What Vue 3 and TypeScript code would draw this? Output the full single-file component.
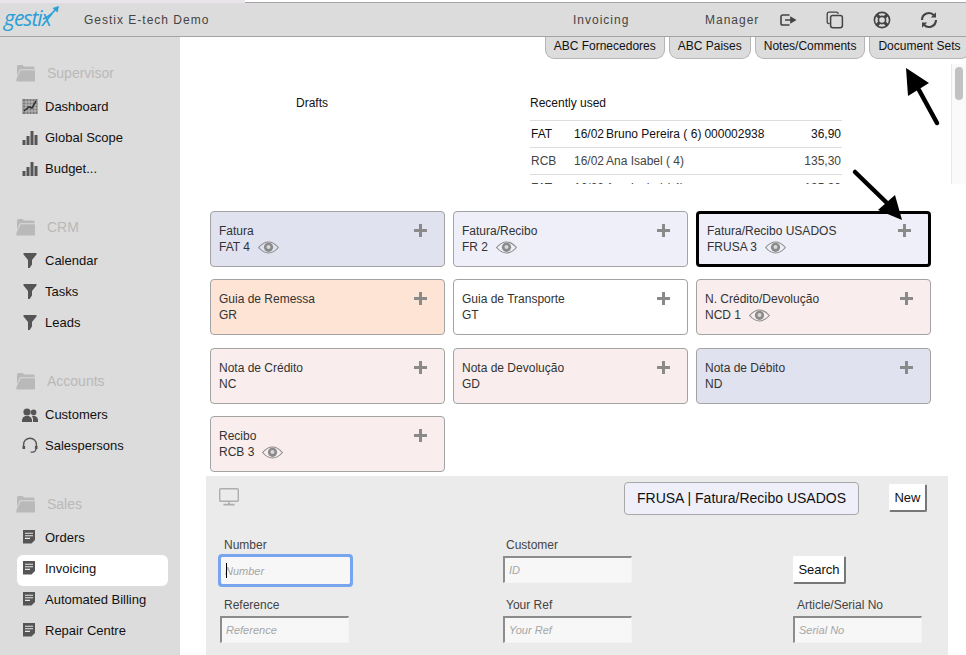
<script setup lang="ts">
type MenuIcon = "chart" | "bars" | "funnel" | "people" | "headset" | "doc";

interface MenuGroup {
  title: string;
  items: { label: string; icon: MenuIcon; active?: boolean }[];
}

interface DocCard {
  name: string;
  code: string;
  count?: number;
  tone: "blue" | "lilac" | "peach" | "white" | "rose";
  selected?: boolean;
}

const menu: MenuGroup[] = [
  {
    title: "Supervisor",
    items: [
      { label: "Dashboard", icon: "chart" },
      { label: "Global Scope", icon: "bars" },
      { label: "Budget...", icon: "bars" },
    ],
  },
  {
    title: "CRM",
    items: [
      { label: "Calendar", icon: "funnel" },
      { label: "Tasks", icon: "funnel" },
      { label: "Leads", icon: "funnel" },
    ],
  },
  {
    title: "Accounts",
    items: [
      { label: "Customers", icon: "people" },
      { label: "Salespersons", icon: "headset" },
    ],
  },
  {
    title: "Sales",
    items: [
      { label: "Orders", icon: "doc" },
      { label: "Invoicing", icon: "doc", active: true },
      { label: "Automated Billing", icon: "doc" },
      { label: "Repair Centre", icon: "doc" },
    ],
  },
];

const tabs = ["ABC Fornecedores", "ABC Paises", "Notes/Comments", "Document Sets"];

const recent = [
  { type: "FAT", date: "16/02", who: "Bruno Pereira ( 6)", doc: "000002938", total: "36,90", dark: true },
  { type: "RCB", date: "16/02", who: "Ana Isabel ( 4)", doc: "", total: "135,30", dark: false },
  { type: "FAT", date: "16/02", who: "Ana Isabel ( 4)", doc: "", total: "135,30", dark: false },
];

const cards: DocCard[] = [
  { name: "Fatura", code: "FAT", count: 4, tone: "blue" },
  { name: "Fatura/Recibo", code: "FR", count: 2, tone: "lilac" },
  { name: "Fatura/Recibo USADOS", code: "FRUSA", count: 3, tone: "lilac", selected: true },
  { name: "Guia de Remessa", code: "GR", tone: "peach" },
  { name: "Guia de Transporte", code: "GT", tone: "white" },
  { name: "N. Crédito/Devolução", code: "NCD", count: 1, tone: "rose" },
  { name: "Nota de Crédito", code: "NC", tone: "rose" },
  { name: "Nota de Devolução", code: "GD", tone: "rose" },
  { name: "Nota de Débito", code: "ND", tone: "blue" },
  { name: "Recibo", code: "RCB", count: 3, tone: "rose" },
];

const cardCode = (card: DocCard): string =>
  card.count ? `${card.code} ${card.count}` : card.code;
</script>

<template>
  <div class="app">
    <div class="strip">
      <div class="strip-tab" />
    </div>

    <header class="topbar">
      <div class="logo">
        <span class="logo-text">gestix</span>
        <svg class="logo-arrow" width="20" height="16" viewBox="0 0 20 16">
          <path d="M2 14 C7 12 11 9 15 4" fill="none" stroke="#2a9fd8" stroke-width="1.6" />
          <path d="M11.5 3 L18 1 L16.5 7.5 Z" fill="#2a9fd8" />
        </svg>
      </div>
      <div class="company">Gestix E-tech Demo</div>
      <div class="module">Invoicing</div>
      <div class="role">Manager</div>
      <div class="actions">
        <svg width="18" height="18" viewBox="0 0 18 18" fill="none">
          <path d="M10.5 4 H3.8 Q2 4 2 5.8 V12.2 Q2 14 3.8 14 H10.5" stroke="#444" stroke-width="1.6" />
          <path d="M6 9 H12 V6.6 L16 9 L12 11.4 V9" fill="#444" stroke="#444" stroke-width="1.6" />
        </svg>
        <svg width="18" height="18" viewBox="0 0 18 18" fill="none" stroke="#444" stroke-width="1.3">
          <path d="M3.6 12.5 H2.8 Q1.2 12.5 1.2 11 V3 Q1.2 1.2 3 1.2 H10.5 Q12 1.2 12.2 3" />
          <rect x="4.6" y="4.4" width="11.8" height="12.4" rx="2.2" stroke-width="1.5" />
        </svg>
        <svg width="18" height="18" viewBox="0 0 18 18" fill="none" stroke="#444">
          <circle cx="9" cy="9" r="7.6" stroke-width="1.6" />
          <circle cx="9" cy="9" r="3.6" stroke-width="1.6" />
          <path d="M3.6 3.6 L6.4 6.4 M14.4 3.6 L11.6 6.4 M3.6 14.4 L6.4 11.6 M14.4 14.4 L11.6 11.6" stroke-width="3.2" />
        </svg>
        <svg width="18" height="18" viewBox="0 0 18 18" fill="none">
          <path d="M2 9 A7 7 0 0 1 14 4.2" stroke="#444" stroke-width="2.2" />
          <path d="M16 9 A7 7 0 0 1 4 13.8" stroke="#444" stroke-width="2.2" />
          <path d="M16 1.2 V6.6 H10.8 Z" fill="#444" />
          <path d="M2 16.8 V11.4 H7.2 Z" fill="#444" />
        </svg>
      </div>
    </header>

    <div class="body">
      <nav class="sidebar">
        <section v-for="group in menu" :key="group.title" class="group">
          <div class="group-title">
            <svg width="20" height="18" viewBox="0 0 20 18" fill="#b9b9b9">
              <path d="M1 2.5 Q1 1 2.5 1 H6.5 L8 2.6 H17 Q18.6 2.6 18.6 4 V5.2 H4 L1 12 Z" />
              <path d="M4.6 6.2 H19 V17.6 H0.4 V15 Z" />
            </svg>
            <span>{{ group.title }}</span>
          </div>
          <a
            v-for="item in group.items"
            :key="item.label"
            class="item"
            :class="{ active: item.active }"
          >
            <svg class="item-icon" width="16" height="16" viewBox="0 0 16 16">
              <g v-if="item.icon === 'chart'">
                <rect x="0.5" y="1" width="15" height="15" fill="#777" />
                <path d="M1 4 H15 M1 7 H15 M1 10 H15 M1 13 H15 M4 1 V16 M7 1 V16 M10 1 V16 M13 1 V16" stroke="#d6d6d6" stroke-width="0.7" />
                <path d="M2 13 L7 9 L10 10 L14 3" fill="none" stroke="#333" stroke-width="1.6" />
              </g>
              <g v-else-if="item.icon === 'bars'" fill="#555">
                <rect x="0.5" y="11" width="3" height="5" />
                <rect x="4.5" y="7" width="3" height="9" />
                <rect x="8.5" y="2" width="3" height="14" />
                <rect x="12.5" y="6" width="3" height="10" />
              </g>
              <path v-else-if="item.icon === 'funnel'" d="M1.5 1 H14.5 V2.6 L10 8 V12.5 L7.6 16 L6 16 V8 L1.5 2.6 Z" fill="#555" />
              <g v-else-if="item.icon === 'people'" fill="#555">
                <circle cx="5" cy="6" r="3.6" />
                <path d="M0 16 V13.5 Q0.5 10.6 3.4 10 H6.6 Q9.5 10.6 10 13.5 V16 Z" />
                <circle cx="11.6" cy="6.4" r="2.8" />
                <path d="M11 16 V13 Q10.8 11.2 9.8 10 H13 Q15.6 10.6 16 13.5 V16 Z" />
              </g>
              <g v-else-if="item.icon === 'headset'" fill="none" stroke="#555">
                <path d="M1.6 10 V7.6 A6.4 6.4 0 0 1 14.4 7.6 V10" stroke-width="1.4" />
                <path d="M1.8 9 V12 M14.2 9 V12" stroke-width="2.6" />
                <path d="M14 12 Q13.6 15 10.5 15.2 H8.6" stroke-width="1.2" />
              </g>
              <g v-else>
                <path d="M1 1 H13 V11 L9.5 14.5 H1 Z" fill="#555" />
                <path d="M3 4.2 H11 M3 6.8 H11 M3 9.4 H8" stroke="#e8e8e8" stroke-width="1.1" />
              </g>
            </svg>
            <span>{{ item.label }}</span>
          </a>
        </section>
      </nav>

      <main class="main">
        <div class="tabs">
          <button v-for="tab in tabs" :key="tab" class="tab">{{ tab }}</button>
        </div>

        <div class="overview">
          <div class="drafts">Drafts</div>
          <div class="recent">
            <div class="recent-title">Recently used</div>
            <table class="recent-table">
              <tr v-for="row in recent" :key="row.type + row.total" :class="{ dark: row.dark }">
                <td class="c-type">{{ row.type }}</td>
                <td class="c-date">{{ row.date }}</td>
                <td class="c-who">{{ row.who }}<span class="c-doc">{{ row.doc }}</span></td>
                <td class="c-total">{{ row.total }}</td>
              </tr>
            </table>
          </div>
          <div class="scrollbar"><div class="thumb" /></div>
        </div>

        <div class="cards">
          <div
            v-for="card in cards"
            :key="card.name"
            class="card"
            :class="[card.tone, { selected: card.selected }]"
          >
            <div class="card-text">
              <div class="card-name">{{ card.name }}</div>
              <div class="card-code">
                <span>{{ cardCode(card) }}</span>
                <svg v-if="card.count" class="eye" width="21" height="13" viewBox="0 0 21 13">
                  <path d="M0.6 6.5 Q5.4 1 10.5 1 Q15.6 1 20.4 6.5 Q15.6 12 10.5 12 Q5.4 12 0.6 6.5 Z" fill="none" stroke="#8a8a8a" stroke-width="1.1" />
                  <circle cx="10.5" cy="6.3" r="4.6" fill="#8a8a8a" />
                  <circle cx="10.5" cy="6" r="2" fill="#d8d8d8" />
                </svg>
              </div>
            </div>
            <span class="plus" />
          </div>
        </div>

        <section class="search">
          <div class="search-head">
            <svg class="monitor" width="20" height="18" viewBox="0 0 20 18" fill="none">
              <rect x="0.7" y="0.7" width="18.6" height="12.6" rx="1" stroke="#aeaeae" stroke-width="1.4" />
              <path d="M10 14 V16 M4.5 16.6 H15.5" stroke="#aeaeae" stroke-width="1.6" />
            </svg>
            <div class="doc-title">FRUSA | Fatura/Recibo USADOS</div>
            <button class="btn new">New</button>
          </div>
          <div class="fields">
            <label class="field">
              <span>Number</span>
              <span class="input-wrap focused">
                <input placeholder="Number" />
                <i class="caret" />
              </span>
            </label>
            <label class="field">
              <span>Customer</span>
              <span class="input-wrap"><input placeholder="ID" /></span>
            </label>
            <div class="field button-field">
              <button class="btn search-btn">Search</button>
            </div>
            <label class="field">
              <span>Reference</span>
              <span class="input-wrap"><input placeholder="Reference" /></span>
            </label>
            <label class="field">
              <span>Your Ref</span>
              <span class="input-wrap"><input placeholder="Your Ref" /></span>
            </label>
            <label class="field">
              <span>Article/Serial No</span>
              <span class="input-wrap"><input placeholder="Serial No" /></span>
            </label>
          </div>
        </section>
      </main>
    </div>

    <!-- annotation arrows drawn on top of the screenshot -->
    <svg class="arrow arrow-tabs" width="40" height="64" viewBox="0 0 40 64">
      <path d="M34 57 L16 24" stroke="#000" stroke-width="4.5" fill="none" stroke-linecap="round" />
      <path d="M3 2 L26 17 L5 30 Z" fill="#000" />
    </svg>
    <svg class="arrow arrow-card" width="70" height="66" viewBox="0 0 70 66">
      <path d="M4 5 L36 36" stroke="#000" stroke-width="4.5" fill="none" stroke-linecap="round" />
      <path d="M51 53 L27 43 L44 28 Z" fill="#000" />
    </svg>
  </div>
</template>

<style>
html,
body {
  margin: 0;
  overflow: hidden;
}
</style>

<style scoped>
.app {
  position: relative;
  width: 966px;
  height: 655px;
  overflow: hidden;
  display: flex;
  flex-direction: column;
  font-family: "Liberation Sans", Arial, sans-serif;
  font-size: 13px;
  color: #111;
  background: #fff;
}

.strip {
  height: 3px;
  flex: none;
  background: #fff;
  border-bottom: 1px solid #a9a5ab;
  box-sizing: border-box;
}

.strip-tab {
  width: 245px;
  height: 3px;
  background: #e9e5ea;
}

.topbar {
  flex: none;
  height: 34px;
  box-sizing: border-box;
  display: flex;
  align-items: center;
  background: #dcdcdc;
  border-bottom: 1px solid #a3a3a3;
  color: #444;
  font-size: 12px;
  letter-spacing: 1px;
}

.logo {
  position: relative;
  width: 84px;
  flex: none;
  padding-left: 4px;
  box-sizing: border-box;
  margin-top: -3px;
}

.logo-text {
  font-family: "Open Sans", sans-serif;
  font-style: italic;
  font-size: 21px;
  letter-spacing: -1px;
  color: #2a9fd8;
  line-height: 28px;
}

.logo-arrow {
  position: absolute;
  left: 41px;
  top: 1px;
}

.company {
  width: 489px;
  flex: none;
}

.module {
  width: 132px;
  flex: none;
}

.role {
  width: 74px;
  flex: none;
}

.actions {
  display: flex;
  gap: 29px;
  align-items: center;
  padding-top: 1px;
}

.body {
  flex: 1;
  min-height: 0;
  display: flex;
}

.sidebar {
  width: 180px;
  flex: none;
  background: #dcdcdc;
  box-sizing: border-box;
  padding: 24px 12px 0 17px;
}

.group {
  margin-bottom: 31.5px;
}

.group-title {
  display: flex;
  align-items: center;
  gap: 11px;
  height: 24px;
  margin-left: -1px;
  margin-bottom: 5.5px;
  color: #b9b9b9;
  font-size: 14px;
}

.item {
  position: relative;
  isolation: isolate;
  display: flex;
  align-items: center;
  gap: 7px;
  height: 31px;
  padding-left: 5px;
  color: #111;
}

.item.active::before {
  content: "";
  position: absolute;
  inset: 2px 0 -2px;
  z-index: -1;
  border-radius: 6px;
  background: #fff;
}

.item-icon {
  flex: none;
}

.main {
  flex: 1;
  min-width: 0;
  display: flex;
  flex-direction: column;
}

.tabs {
  flex: none;
  display: flex;
  justify-content: flex-end;
  gap: 4px;
  height: 22px;
  margin-right: -3.5px;
}

.tab {
  padding: 0 8px 3px;
  margin: 0;
  height: 22px;
  font: 12px "Liberation Sans", Arial, sans-serif;
  color: #111;
  background: #dcdcdc;
  border: 1px solid #b5b5b5;
  border-top: none;
  border-radius: 0 0 9px 9px;
}

.overview {
  flex: none;
  height: 125px;
  display: flex;
  position: relative;
  overflow: hidden;
  box-sizing: border-box;
  padding-top: 37px;
  font-size: 12px;
}

.drafts {
  width: 350px;
  box-sizing: border-box;
  padding-left: 116px;
  flex: none;
}

.recent {
  width: 312px;
  flex: none;
}

.recent-title {
  height: 24px;
  line-height: 14px;
}

.recent-table {
  width: 100%;
  border-collapse: collapse;
  border-top: 1px solid #ddd;
  color: #444;
}

.recent-table tr {
  height: 27px;
  border-bottom: 1px solid #ddd;
}

.recent-table tr.dark {
  color: #111;
}

.recent-table td {
  padding: 0;
}

.c-type {
  width: 43px;
  padding-left: 1px !important;
}

.c-date {
  width: 32px;
}

.c-doc {
  margin-left: 3px;
}

.c-total {
  text-align: right;
  padding-right: 1px !important;
}

.scrollbar {
  position: absolute;
  right: 0;
  top: 5px;
  bottom: 0;
  width: 15px;
  box-sizing: border-box;
  background: #fafafa;
  border-left: 1px solid #e8e8e8;
}

.thumb {
  width: 8px;
  height: 33px;
  margin: 3px 0 0 3px;
  border-radius: 4px;
  background: #c2c2c2;
}

.cards {
  flex: none;
  display: grid;
  grid-template-columns: repeat(3, 235px);
  grid-auto-rows: 56px;
  column-gap: 8px;
  row-gap: 12.4px;
  padding: 27px 0 0 30px;
  height: 292px;
  box-sizing: border-box;
}

.card {
  position: relative;
  display: flex;
  justify-content: space-between;
  box-sizing: border-box;
  padding: 11px 17px 0 8px;
  border: 1px solid #a3a3a3;
  border-radius: 4px;
  font-size: 12px;
  color: #333;
}

.card.blue {
  background: #e0e2f0;
}

.card.lilac {
  background: #eeeff8;
}

.card.peach {
  background: #fde4d5;
}

.card.white {
  background: #fff;
}

.card.rose {
  background: #f9eded;
}

.card.selected {
  border: 3px solid #000;
  padding: 9px 17px 0 8px;
  border-radius: 4px;
}

.card-name {
  line-height: 16px;
}

.card-code {
  display: flex;
  align-items: center;
  line-height: 16px;
  white-space: pre;
}

.eye {
  margin-left: 8px;
}

.plus {
  position: relative;
  width: 13px;
  height: 13px;
  margin-top: 1px;
  flex: none;
}

.plus::before,
.plus::after {
  content: "";
  position: absolute;
  background: #8a8a8a;
}

.plus::before {
  left: 0;
  right: 0;
  top: 5px;
  height: 3px;
}

.plus::after {
  top: 0;
  bottom: 0;
  left: 5px;
  width: 3px;
}

.search {
  flex: 1;
  min-height: 0;
  margin: 0 18px 0 26px;
  padding: 12px 14px 0 14px;
  background: #ebebeb;
  color: #444;
  font-size: 12px;
}

.search-head {
  display: flex;
  align-items: flex-start;
  height: 49px;
}

.monitor {
  flex: none;
  margin-left: -1px;
}

.doc-title {
  margin-left: 385px;
  width: 235px;
  height: 33px;
  margin-top: -6px;
  box-sizing: border-box;
  border: 1px solid #a8a8ab;
  border-radius: 4px;
  background: #eeeff8;
  color: #111;
  font-size: 14px;
  line-height: 31px;
  text-align: center;
  white-space: nowrap;
}

.btn {
  margin: 0;
  padding: 0;
  box-sizing: border-box;
  background: #fff;
  border: 1px solid #fff;
  border-right: 2px solid #777;
  border-bottom: 2px solid #777;
  border-radius: 2px;
  color: #111;
  font: 13px "Liberation Sans", Arial, sans-serif;
}

.new {
  width: 38px;
  height: 28px;
  margin: -4px 0 0 30px;
}

.fields {
  display: grid;
  grid-template-columns: 283px 290px 130px;
  grid-auto-rows: 60px;
}

.field {
  display: flex;
  flex-direction: column;
  align-items: flex-start;
}

.field > span:first-child {
  height: 19px;
  line-height: 16px;
  padding-left: 4px;
}

.field:nth-child(3n + 2) > span:first-child {
  padding-left: 3px;
}

.input-wrap {
  position: relative;
  display: block;
}

.input-wrap input {
  display: block;
  width: 129px;
  height: 27px;
  box-sizing: border-box;
  padding: 0 4px;
  background: #f7f7f7;
  border: 1px solid #f3f3f3;
  border-top: 2px solid #8c8c8c;
  border-left: 2px solid #8c8c8c;
  outline: none;
  font: italic 11px "Liberation Sans", Arial, sans-serif;
}

.input-wrap input::placeholder {
  color: #a6a6a6;
  opacity: 1;
}

.input-wrap.focused input {
  width: 131px;
  height: 29px;
  border: 1px solid #777;
  border-radius: 2px;
  outline: 3px solid #77a5ee;
  outline-offset: -1px;
}

.caret {
  position: absolute;
  left: 6px;
  top: 7px;
  width: 1px;
  height: 15px;
  background: #000;
}

.button-field {
  padding-top: 19px;
  box-sizing: border-box;
}

.search-btn {
  width: 53px;
  height: 28px;
}

.arrow {
  position: absolute;
}

.arrow-tabs {
  left: 903px;
  top: 66px;
}

.arrow-card {
  left: 851px;
  top: 167px;
}
</style>
